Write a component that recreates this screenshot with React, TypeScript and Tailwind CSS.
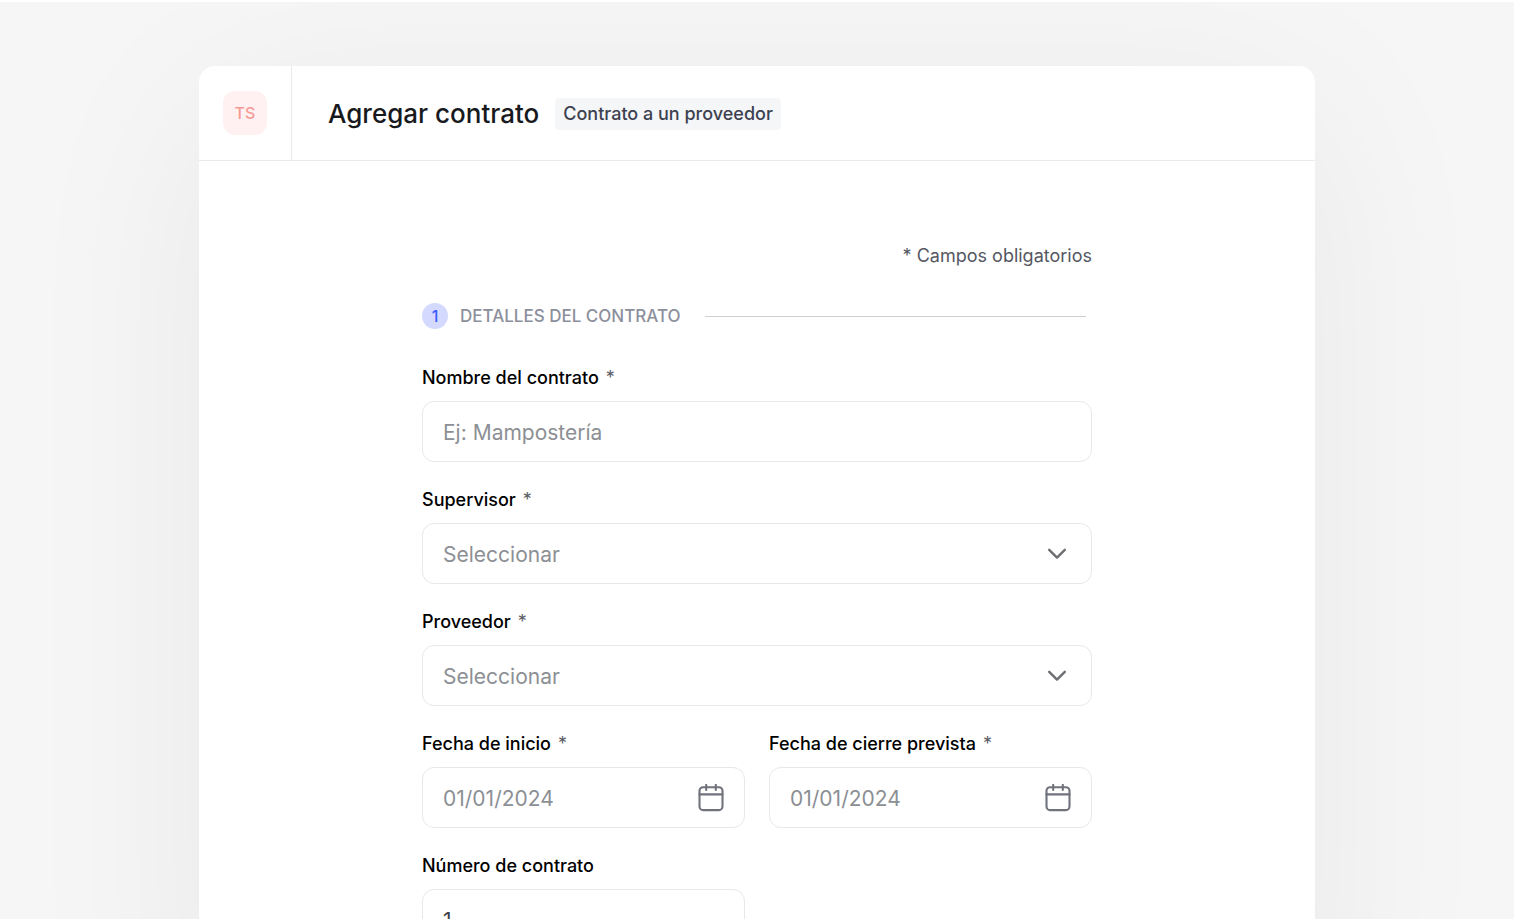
import { useId } from 'react';
import type { ReactNode } from 'react';

const box =
  'block h-[61px] w-full rounded-xl border border-[#e8e8ea] bg-white px-5 pt-[2px] text-[21px] leading-7 text-[#3f3f46] outline-none placeholder:text-[#8c8f94] placeholder:opacity-100 focus:border-[#9aa8f5]';

function Field({ id, label, required, children }: { id: string; label: string; required?: boolean; children: ReactNode }) {
  return (
    <div className="flex flex-col gap-[11px]">
      <div className="flex gap-[7px] text-lg leading-6">
        <label htmlFor={id} className="font-medium text-black">
          {label}
        </label>
        {required && <span className="text-[#5b5d66]">*</span>}
      </div>
      {children}
    </div>
  );
}

function TextField({ label, required, placeholder, value }: { label: string; required?: boolean; placeholder?: string; value?: string }) {
  const id = useId();
  return (
    <Field id={id} label={label} required={required}>
      <input id={id} type="text" className={box} placeholder={placeholder} defaultValue={value} />
    </Field>
  );
}

function SelectField({ label }: { label: string }) {
  const id = useId();
  return (
    <Field id={id} label={label} required>
      <div className="grid items-center">
        <select id={id} defaultValue="" className={`${box} col-start-1 row-start-1 appearance-none text-[#8c8f94]!`}>
          <option value="">Seleccionar</option>
        </select>
        <svg
          aria-hidden="true"
          className="pointer-events-none col-start-1 row-start-1 mr-[25px] h-5 w-5 justify-self-end"
          viewBox="0 0 20 20"
          fill="none"
          stroke="#6d6f73"
          strokeWidth="2.4"
          strokeLinecap="round"
          strokeLinejoin="round"
        >
          <path d="M2.2 5.8 10 13.6l7.8-7.8" />
        </svg>
      </div>
    </Field>
  );
}

function DateField({ label }: { label: string }) {
  const id = useId();
  return (
    <Field id={id} label={label} required>
      <div className="grid items-center">
        <input id={id} type="text" inputMode="numeric" className={`${box} col-start-1 row-start-1`} placeholder="01/01/2024" />
        <button type="button" aria-label="Abrir calendario" className="col-start-1 row-start-1 mr-5 justify-self-end">
          <svg
            aria-hidden="true"
            className="block h-7 w-7"
            viewBox="0 0 28 28"
            fill="none"
            stroke="#70727c"
            strokeWidth="2.1"
            strokeLinecap="round"
            strokeLinejoin="round"
          >
            <rect x="2.5" y="3.2" width="23" height="22.9" rx="3.6" />
            <path d="M2.5 10.4h23M9.2 .9v5M18.8 .9v5" />
          </svg>
        </button>
      </div>
    </Field>
  );
}

export default function App() {
  return (
    <div className="h-screen overflow-y-auto border-t-2 border-white bg-[#f6f6f6] px-6 pt-16 font-['Inter','Liberation_Sans',sans-serif] [scrollbar-width:none]">
      <main className="mx-auto w-full max-w-[1116px] rounded-t-2xl bg-white pb-20 shadow-[0_40px_200px_0_rgba(0,0,0,0.06)]">
        <header className="flex h-[95px] border-b border-[#ebebed]">
          <div className="flex w-[93px] shrink-0 items-center justify-center border-r border-[#ebebed]">
            <span className="flex h-11 w-11 items-center justify-center rounded-xl bg-[#fff1f1] text-base font-medium text-[#f59a95]">
              TS
            </span>
          </div>
          <div className="flex items-center gap-4 px-9 pt-[2px]">
            <h1 className="text-[26px] leading-9 font-medium text-[#18191d]">Agregar contrato</h1>
            <span className="rounded-sm bg-[#f4f6f8] px-2 py-1 text-lg leading-6 font-medium text-[#3d4150]">
              Contrato a un proveedor
            </span>
          </div>
        </header>

        <form className="mx-auto w-full max-w-[670px] pt-[83px]">
          <p className="text-right text-lg leading-6 text-[#555762]">* Campos obligatorios</p>

          <div className="mt-[35px] flex items-center">
            <span className="flex h-[26px] w-[26px] items-center justify-center rounded-full bg-[#d3d9ff] text-base font-medium text-[#3b5bff]">
              1
            </span>
            <h2 className="ml-3 text-[17px] leading-6 font-medium text-[#8c8f9c]">DETALLES DEL CONTRATO</h2>
            <span className="mr-[6px] ml-6 h-px flex-1 bg-[#cfd0d3]" />
          </div>

          <div className="mt-[37px] flex flex-col gap-[26px]">
            <TextField label="Nombre del contrato" required placeholder="Ej: Mampostería" />
            <SelectField label="Supervisor" />
            <SelectField label="Proveedor" />
            <div className="grid grid-cols-2 gap-x-6 gap-y-[26px]">
              <DateField label="Fecha de inicio" />
              <DateField label="Fecha de cierre prevista" />
              <TextField label="Número de contrato" value="1" />
            </div>
          </div>
        </form>
      </main>
    </div>
  );
}
